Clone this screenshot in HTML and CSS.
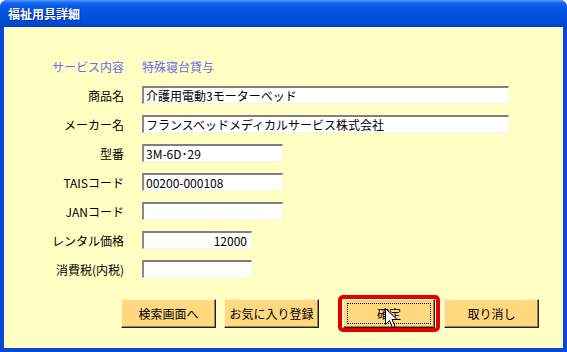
FILE: index.html
```html
<!DOCTYPE html>
<html lang="ja">
<head>
  <meta charset="UTF-8" />
  <title>福祉用具詳細</title>
  <link rel="stylesheet" href="styles.css">
</head>
<body>
  <div class="window">
    <!-- Titelleiste -->
    <div class="titlebar">福祉用具詳細</div>

    <div class="client">
      <!-- Formular -->
      <div class="form">
        <div class="label info">サービス内容</div>
        <div class="value info">特殊寝台貸与</div>

        <div class="label">商品名</div>
        <input class="field wide" type="text" value="介護用電動3モーターベッド" readonly>

        <div class="label">メーカー名</div>
        <input class="field wide" type="text" value="フランスベッドメディカルサービス株式会社" readonly>

        <div class="label">型番</div>
        <input class="field mid" type="text" value="3M-6D･29" readonly>

        <div class="label">TAISコード</div>
        <input class="field mid" type="text" value="00200-000108" readonly>

        <div class="label">JANコード</div>
        <input class="field mid" type="text" value="" readonly>

        <div class="label">レンタル価格</div>
        <input class="field short num" type="text" value="12000" readonly>

        <div class="label">消費税(内税)</div>
        <input class="field short" type="text" value="" readonly>
      </div>

      <!-- Schaltflächen -->
      <div class="buttons">
        <button class="btn">検索画面へ</button>
        <button class="btn">お気に入り登録</button>
        <div class="highlight">
          <button class="btn focus">確定</button>
        </div>
        <button class="btn">取り消し</button>
      </div>

      <!-- Mauszeiger -->
      <svg class="cursor" width="13" height="21" viewBox="0 0 13 21">
        <path d="M0.5 0.5 L0.5 16.5 L4.5 12.5 L7.5 19.5 L10 18.5 L7 11.5 L12 11.5 Z" fill="#fff" stroke="#000" stroke-width="1"/>
      </svg>
    </div>
  </div>
</body>
</html>
```

FILE: styles.css
```css
/* --- Grunddesign --- */
body {
  margin: 0;
  padding: 0;
  background: #fff;
  font-family: "Noto Sans CJK JP", "DejaVu Sans", sans-serif;
  font-size: 12px;
}

/* --- Fenster --- */
.window {
  width: 567px;
  height: 352px;
  display: flex;
  flex-direction: column;
  background: #0a47d8;
  border-radius: 7px 7px 0 0;
  overflow: hidden;
}
.titlebar {
  height: 27px;
  flex: none;
  display: flex;
  align-items: center;
  padding-left: 8px;
  color: #fff;
  font-weight: bold;
  font-size: 12px;
  text-shadow: 1px 1px 0 #0a2a8a;
  background: linear-gradient(#4a9cff 0, #1a66f0 3px, #0456e6 8px, #0052e0 50%, #004ad6 85%, #0040c4 100%);
}
.client {
  position: relative;
  flex: 1;
  margin: 0 4px 4px 4px;
  background: #ffffc4;
  border-left: 1px solid #ffffe0;
}

/* --- Formular (Raster) --- */
.form {
  display: grid;
  grid-template-columns: 119px auto;
  grid-auto-rows: 18px;
  column-gap: 18px;
  row-gap: 11px;
  justify-items: start;
  align-items: center;
  padding-top: 30px;
}
.label {
  justify-self: end;
  color: #000;
  white-space: nowrap;
}
.info {
  color: #6a6af4;
}
.field {
  box-sizing: border-box;
  height: 18px;
  margin: 0;
  padding: 0 2px;
  font-family: inherit;
  font-size: 12px;
  color: #000;
  background: #fff;
  border-style: solid;
  border-width: 2px 1px 1px 2px;
  border-color: #7f7f7f #f4f4e8 #f4f4e8 #8a8a8a;
  outline: none;
}
.wide {
  width: 367px;
}
.mid {
  width: 141px;
}
.short {
  width: 110px;
}
.num {
  text-align: right;
  padding-right: 4px;
}

/* --- Schaltflächen --- */
.buttons {
  display: flex;
  align-items: center;
  gap: 8px;
  margin: 17px 0 0 116px;
}
.btn {
  box-sizing: border-box;
  width: 95px;
  height: 29px;
  padding: 0;
  font-family: inherit;
  font-size: 12px;
  color: #000;
  background: #ffd880;
  border: 1px solid;
  border-color: #fff3d0 #202020 #202020 #fff3d0;
  box-shadow: inset -1px -1px 0 #a08040;
}
.highlight {
  margin: 0 -4px 0 11px;
  border: 4px solid #e40000;
  border-radius: 5px;
  padding: 0 1px;
  display: flex;
}
.btn.focus {
  width: 92px;
  outline: 1px dotted #000;
  outline-offset: -5px;
}

/* --- Mauszeiger (liegt über dem Button) --- */
.cursor {
  position: absolute;
  left: 380px;
  top: 281px;
}
```
